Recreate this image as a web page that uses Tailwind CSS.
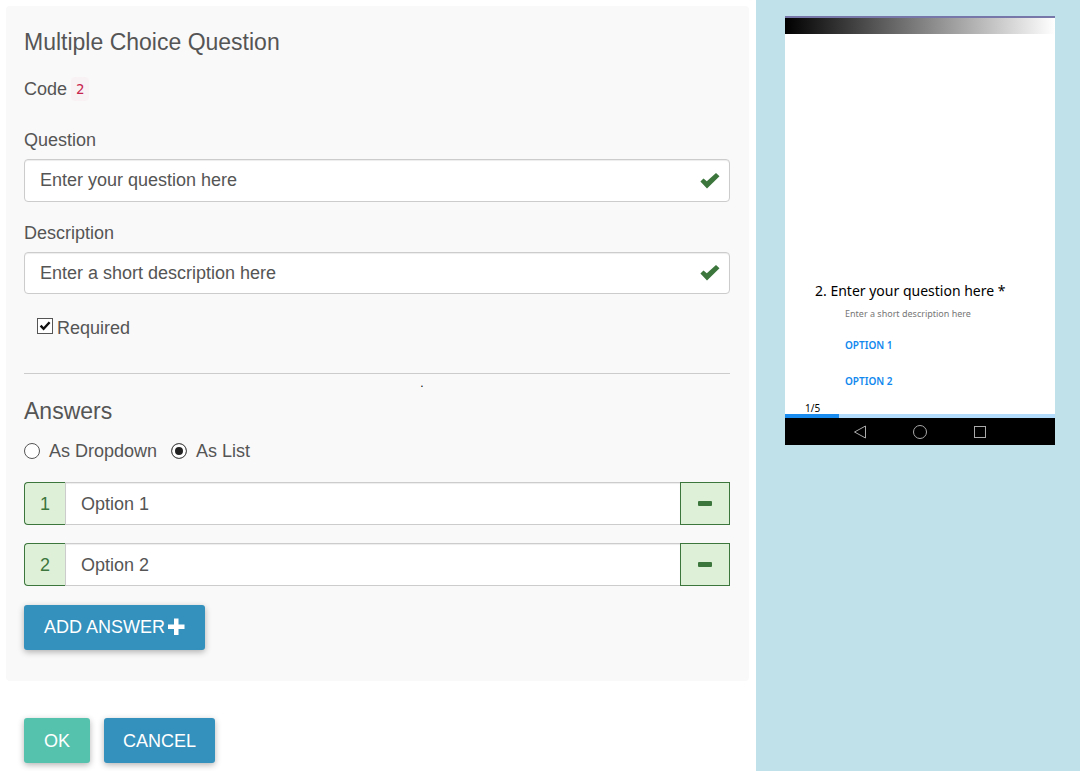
<!DOCTYPE html>
<html lang="en">
<head>
    <meta charset="UTF-8">
    <meta name="viewport" content="width=device-width, initial-scale=1.0">
    <title>Multiple Choice Question</title>
    <script src="https://cdn.jsdelivr.net/npm/@tailwindcss/browser@4"></script>
</head>
<body class="bg-white min-h-screen flex font-['Liberation_Sans',Arial,sans-serif] text-[18px] leading-[26px] text-[#555]">

    <!-- Editor -->
    <main class="w-[70%] pt-[6px] pl-[6px] pr-[7px]">
        <form>
            <section class="bg-[#f9f9f9] rounded-sm pl-[18px] pr-[19px] pt-[23px] pb-[31px]">
                <h1 class="text-[23px] leading-[26px]">Multiple Choice Question</h1>

                <p class="mt-[21px] flex items-center gap-1">
                    Code
                    <code class="bg-[#f9f2f4] text-[#c7254e] rounded font-['DejaVu_Sans_Mono',monospace] text-[14px] leading-6 px-[5px]">2</code>
                </p>

                <label for="question" class="block mt-[25px]">Question</label>
                <div class="relative mt-[6px]">
                    <input type="text" id="question" value="Enter your question here" class="block w-full h-[43px] bg-white border border-[#ccc] rounded pl-[15px] pr-12 shadow-[inset_0_1px_1px_rgba(0,0,0,0.075)]">
                    <svg class="absolute right-[10px] top-[14px] w-5 h-4" viewBox="0 0 20 16" fill="#3c763d"><path d="M.4 8.600 3.500 5.500 6.800 8.300 16 0 19.500 3.300 7 15.600z"/></svg>
                </div>

                <label for="description" class="block mt-[18px]">Description</label>
                <div class="relative mt-[6px]">
                    <input type="text" id="description" value="Enter a short description here" class="block w-full h-[42px] bg-white border border-[#ccc] rounded pl-[15px] pr-12 shadow-[inset_0_1px_1px_rgba(0,0,0,0.075)]">
                    <svg class="absolute right-[10px] top-[13px] w-5 h-4" viewBox="0 0 20 16" fill="#3c763d"><path d="M.4 8.600 3.500 5.500 6.800 8.300 16 0 19.500 3.300 7 15.600z"/></svg>
                </div>

                <div class="flex items-start gap-1 mt-6 pl-[13px] leading-5">
                    <span class="grid">
                        <input type="checkbox" id="required" checked class="peer col-start-1 row-start-1 appearance-none w-4 h-4 bg-white border border-[#555]">
                        <svg class="col-start-1 row-start-1 w-4 h-4 pointer-events-none invisible peer-checked:visible" viewBox="0 0 16 16" fill="none" stroke="#111" stroke-width="2.4"><path d="M3.6 7.6 6.6 10.8 12.6 4.2"/></svg>
                    </span>
                    <label for="required">Required</label>
                </div>

                <div class="relative mt-[35px] border-t border-[#ccc]">
                    <span class="absolute left-[56%] top-px pl-px text-[12px] leading-4 text-black">.</span>
                </div>

                <h2 class="mt-6 text-[23px] leading-[26px]">Answers</h2>

                <div class="flex gap-[14px] mt-[14px]">
                    <label class="flex items-center gap-[9px]">
                        <input type="radio" name="display" value="dropdown" class="appearance-none w-4 h-4 rounded-full border border-[#555] bg-white checked:bg-[#222] checked:shadow-[inset_0_0_0_3px_white]">
                        As Dropdown
                    </label>
                    <label class="flex items-center gap-[9px]">
                        <input type="radio" name="display" value="list" checked class="appearance-none w-4 h-4 rounded-full border border-[#555] bg-white checked:bg-[#222] checked:shadow-[inset_0_0_0_3px_white]">
                        As List
                    </label>
                </div>

                <div class="flex h-[43px] mt-[18px]">
                    <label for="answer1" class="w-[41px] flex items-center justify-center bg-[#dff0d8] text-[#3c763d] border border-r-0 border-[#3c763d] rounded-l">1</label>
                    <input type="text" id="answer1" value="Option 1" class="flex-1 min-w-0 bg-white border border-r-0 border-[#ccc] px-[15px] shadow-[inset_0_1px_1px_rgba(0,0,0,0.075)]">
                    <button type="button" aria-label="Remove answer 1" class="w-[50px] flex items-center justify-center bg-[#dff0d8] border border-[#3c763d]">
                        <svg class="w-[14px] h-[5px]" viewBox="0 0 14 5" fill="#3c763d"><rect width="14" height="5" rx="1"/></svg>
                    </button>
                </div>

                <div class="flex h-[43px] mt-[18px]">
                    <label for="answer2" class="w-[41px] flex items-center justify-center bg-[#dff0d8] text-[#3c763d] border border-r-0 border-[#3c763d] rounded-l">2</label>
                    <input type="text" id="answer2" value="Option 2" class="flex-1 min-w-0 bg-white border border-r-0 border-[#ccc] px-[15px] shadow-[inset_0_1px_1px_rgba(0,0,0,0.075)]">
                    <button type="button" aria-label="Remove answer 2" class="w-[50px] flex items-center justify-center bg-[#dff0d8] border border-[#3c763d]">
                        <svg class="w-[14px] h-[5px]" viewBox="0 0 14 5" fill="#3c763d"><rect width="14" height="5" rx="1"/></svg>
                    </button>
                </div>

                <button type="button" class="flex items-center gap-[2px] h-[45px] mt-[19px] px-5 pb-[2px] bg-[#3490bc] text-white rounded-[3px] shadow-[0_2px_6px_rgba(0,0,0,0.3)]">
                    ADD ANSWER
                    <svg class="w-[18px] h-[18px]" viewBox="0 0 18 18" fill="#fff"><path d="M7 .5h4.500v6h6v4.500h-6v6h-4.500v-6h-6v-4.500h6z"/></svg>
                </button>
            </section>

            <div class="flex gap-[14px] px-[18px] pt-[37px]">
                <button type="submit" class="h-[45px] px-5 bg-[#55c2ae] text-white rounded-[3px] shadow-[0_2px_6px_rgba(0,0,0,0.3)]">OK</button>
                <button type="button" class="h-[45px] px-[19px] bg-[#3490bc] text-white rounded-[3px] shadow-[0_2px_6px_rgba(0,0,0,0.3)]">CANCEL</button>
            </div>
        </form>
    </main>

    <!-- Phone preview -->
    <aside class="w-[30%] bg-[#c0e1ea] pt-4 pl-[29px] pr-[25px] font-['Noto_Sans',sans-serif]">
        <div class="bg-white aspect-[270/429] flex flex-col">
            <div class="h-[18px] border-t-2 border-[#7777a9] bg-linear-to-r/srgb from-black to-white"></div>
            <div class="flex-1 flex flex-col justify-end">
                <h3 class="pl-[30px] text-[14px] leading-5 text-black">2. Enter your question here *</h3>
                <div class="pl-[60px] flex flex-col items-start">
                    <p class="mt-[5px] text-[9px] leading-4 text-[#777]">Enter a short description here</p>
                    <button type="button" class="mt-[15px] text-[10px] leading-4 font-semibold text-[#1088ee]">OPTION 1</button>
                    <button type="button" class="mt-5 text-[10px] leading-4 font-semibold text-[#1088ee]">OPTION 2</button>
                </div>
                <p class="mt-[13px] pl-5 text-[10px] leading-3 text-black">1/5</p>
            </div>
            <div class="h-1 bg-[#b3dbfb]">
                <div class="h-full bg-[#1a8cf0]" style="width: 20%"></div>
            </div>
            <nav class="h-[27px] bg-black flex items-center justify-center gap-[44px]">
                <svg class="w-4 h-4" viewBox="0 0 16 16" fill="none" stroke="#aaa"><path d="M13.500 2v12L2.500 8z"/></svg>
                <svg class="w-4 h-4" viewBox="0 0 16 16" fill="none" stroke="#aaa"><circle cx="8" cy="8" r="6.500"/></svg>
                <svg class="w-4 h-4" viewBox="0 0 16 16" fill="none" stroke="#aaa"><rect x="2.500" y="2.500" width="11" height="11"/></svg>
            </nav>
        </div>
    </aside>

</body>
</html>
